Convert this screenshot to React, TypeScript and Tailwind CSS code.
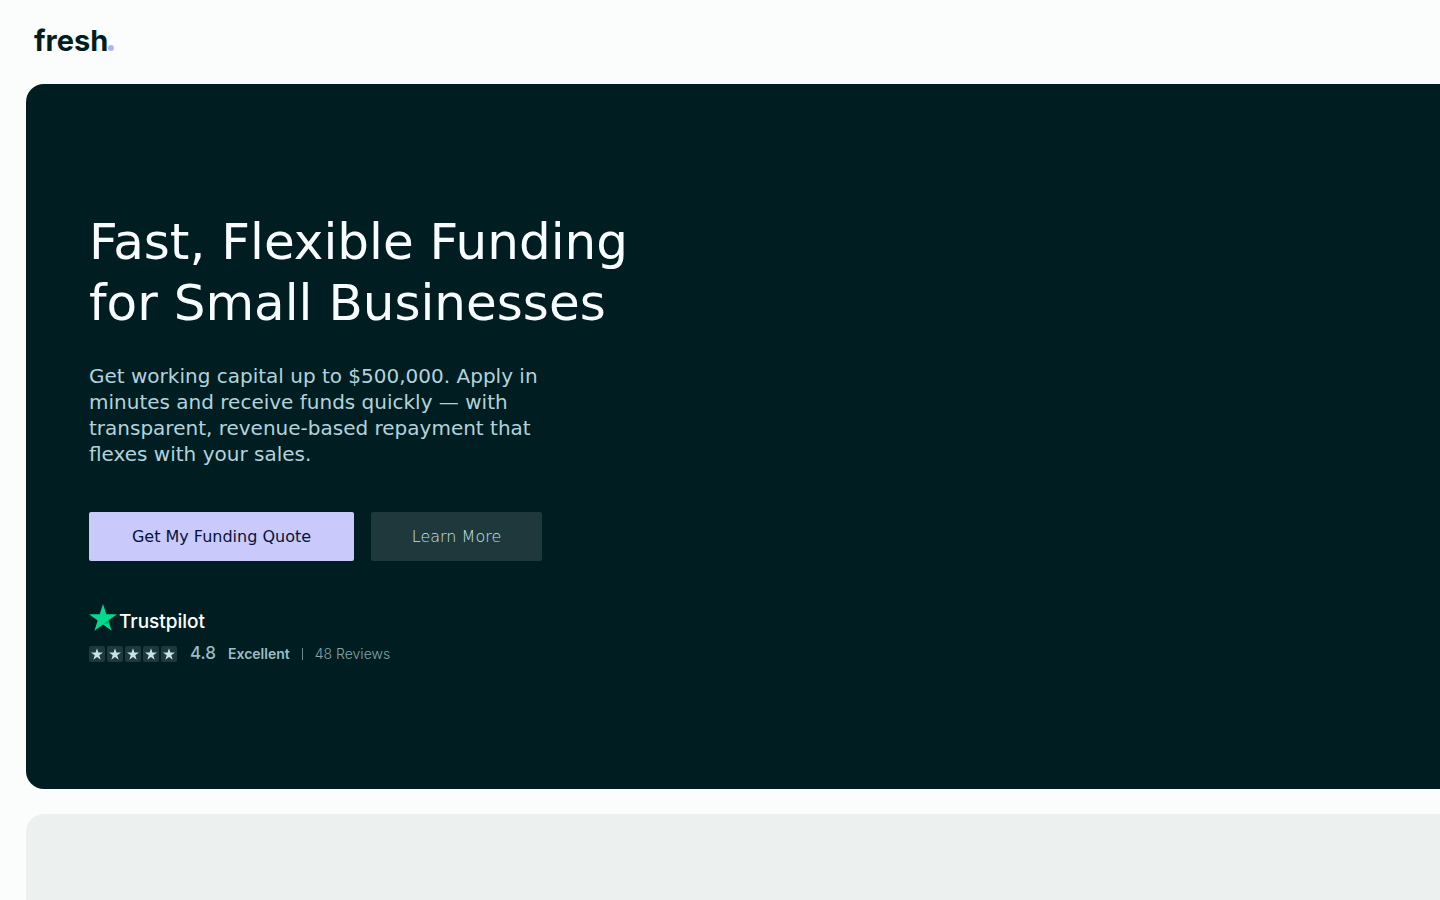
const STARS = [1, 2, 3, 4, 5]

// ─── Logo ─────────────────────────────────────────────────────────────────────

function Logo() {
  return (
    <a href="#" className="flex items-baseline font-['Inter',sans-serif] text-[29px] leading-10 font-bold text-[#001e20]">
      fresh
      <span className="size-[6px] rounded-full bg-[#b9b0ee]" />
    </a>
  )
}

// ─── Trustpilot ───────────────────────────────────────────────────────────────

function Trustpilot() {
  return (
    <div className="flex flex-col gap-3 font-['Inter',sans-serif]">
      <div className="flex h-[30px] items-start gap-0.5">
        <svg viewBox="0 0 28 27" className="h-[27px] w-7 shrink-0" aria-hidden="true">
          <path d="M14 0l3.3 10.2H28l-8.7 6.3L22.6 26.7 14 20.4 5.4 26.7l3.3-10.2L0 10.2h10.7z" fill="#04da8d" />
          <path d="M20.1 18.9l-.8-2.4L14 20.4z" fill="#04a673" />
        </svg>
        <span className="mt-1 text-[19px] leading-7 font-medium text-white">Trustpilot</span>
      </div>
      <div className="flex h-4 items-center text-[#9dbcc4]">
        <div className="flex gap-0.5">
          {STARS.map(n => (
            <span key={n} className="flex size-4 items-center justify-center rounded-xs bg-[#1e383c]">
              <svg viewBox="0 0 28 27" className="size-3" aria-hidden="true">
                <path d="M14 0l3.3 10.2H28l-8.7 6.3L22.6 26.7 14 20.4 5.4 26.7l3.3-10.2L0 10.2h10.7z" fill="#c4e2e9" />
              </svg>
            </span>
          ))}
        </div>
        <span className="ml-[13px] text-[17px] font-medium">4.8</span>
        <span className="ml-3 text-sm font-semibold">Excellent</span>
        <span className="ml-3 h-3 w-px bg-[#6d8a90]" />
        <span className="ml-3 text-sm font-light text-[#86a3aa]">48 Reviews</span>
      </div>
    </div>
  )
}

// ─── Page ─────────────────────────────────────────────────────────────────────

export default function App() {
  return (
    <div className="flex min-h-screen flex-col bg-[#fafdfc] font-['DejaVu_Sans',sans-serif]">
      <header className="flex h-[84px] items-center px-[34px] pb-0.5">
        <Logo />
      </header>

      <main className="flex flex-1 flex-col gap-[25px] pl-[26px]">
        {/* Hero */}
        <section className="rounded-l-[18px] bg-[#001e21] px-[63px] pt-32 pb-[127px]">
          <h1 className="text-[50px] leading-[61px] text-[#f8fcff]">
            Fast, Flexible Funding
            <br />
            for Small Businesses
          </h1>
          <p className="mt-[29px] max-w-[490px] text-xl leading-[26px] text-[#b4d2dc]">
            Get working capital up to $500,000. Apply in
            <br />
            minutes and receive funds quickly — with
            <br />
            transparent, revenue-based repayment that
            <br />
            flexes with your sales.
          </p>
          <div className="mt-[45px] flex gap-[17px]">
            <button className="h-[49px] w-[265px] rounded-xs bg-[#c9c9fb] text-base text-[#04143a]">
              Get My Funding Quote
            </button>
            <button className="h-[49px] w-[171px] rounded-xs bg-[#1e383c] text-base font-extralight text-[#c4e2e9]">
              Learn More
            </button>
          </div>
          <div className="mt-[43px]">
            <Trustpilot />
          </div>
        </section>

        {/* Next section */}
        <section className="flex-1 rounded-tl-[18px] bg-[#ecf0ef]" />
      </main>
    </div>
  )
}
